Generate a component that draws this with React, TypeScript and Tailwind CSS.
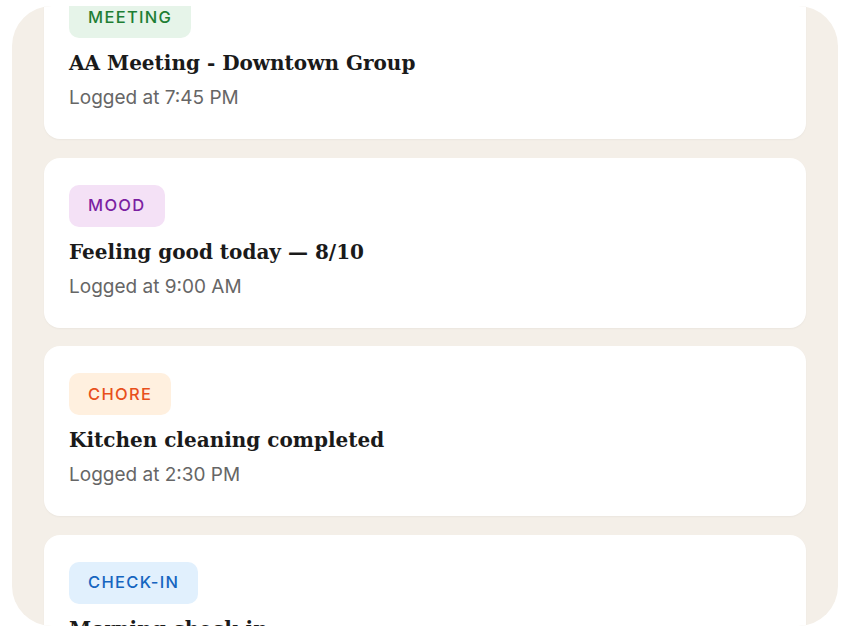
import React from "react"

type LogEntry = {
  id: number
  kind: string
  title: string
  time: string
  badge: string
}

const entries: LogEntry[] = [
  {
    id: 1,
    kind: "MEETING",
    title: "AA Meeting - Downtown Group",
    time: "Logged at 7:45 PM",
    badge: "bg-[#e6f4e9] text-[#1e7e34]",
  },
  {
    id: 2,
    kind: "MOOD",
    title: "Feeling good today — 8/10",
    time: "Logged at 9:00 AM",
    badge: "bg-[#f4e1f6] text-[#7b1fa2]",
  },
  {
    id: 3,
    kind: "CHORE",
    title: "Kitchen cleaning completed",
    time: "Logged at 2:30 PM",
    badge: "bg-[#fff0df] text-[#e8501c]",
  },
  {
    id: 4,
    kind: "CHECK-IN",
    title: "Morning check-in",
    time: "Logged at 8:15 AM",
    badge: "bg-[#e1f0fd] text-[#1565c0]",
  },
]

const EntryCard = ({ entry }: { entry: LogEntry }) => {
  return (
    <div className="bg-white rounded-2xl pt-[27px] px-[25px] pb-[27px] shadow-[0_1px_2px_rgba(0,0,0,0.04)]">
      <span
        className={`inline-flex items-center h-[42px] px-[19px] rounded-[10px] text-[16.5px] font-medium tracking-[0.08em] font-['Inter',sans-serif] ${entry.badge}`}
      >
        {entry.kind}
      </span>
      <h3 className="mt-[11px] text-[20px] leading-[28px] font-bold text-[#1a1a1a] font-['DejaVu_Serif',serif]">
        {entry.title}
      </h3>
      <p className="mt-[7px] text-[19px] leading-[28px] text-[#666666] font-['Inter',sans-serif]">
        {entry.time}
      </p>
    </div>
  )
}

const App = () => {
  return (
    <div className="w-[855px] h-[632px] bg-white overflow-hidden pt-[6px]">
      <div className="ml-3 mr-[17px] h-[620px] rounded-[40px] bg-[#f4efe8] overflow-hidden">
        <div className="-mt-[37px] px-8 flex flex-col gap-[18.5px]">
          {entries.map((entry) => (
            <EntryCard key={entry.id} entry={entry} />
          ))}
        </div>
      </div>
    </div>
  )
}

export default App
